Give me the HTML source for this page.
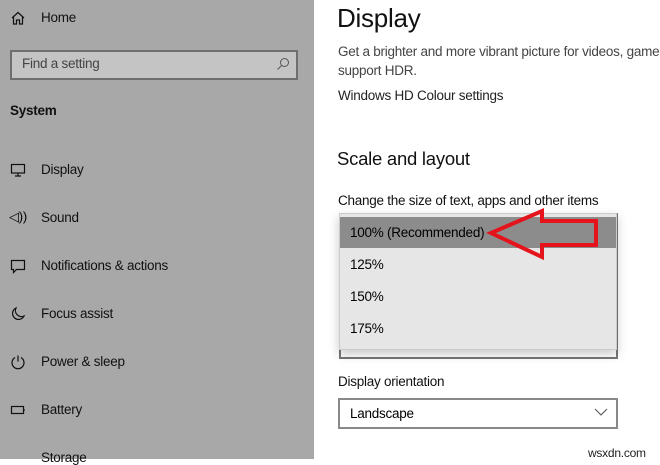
<!DOCTYPE html>
<html><head><meta charset="utf-8"><style>
*{margin:0;padding:0;box-sizing:border-box}
body{width:660px;height:459px;overflow:hidden;background:#fff;font-family:"Liberation Sans",sans-serif;position:relative;color:#000;letter-spacing:-0.25px}
.sb{position:absolute;left:0;top:0;width:314px;height:459px;background:#a8a8a8}
.t{position:absolute;white-space:nowrap}
.ni{position:absolute;left:41px;font-size:13.5px;color:#111}
.ic{position:absolute;left:10px;width:16px;height:16px}
</style></head><body>
<div class="sb">
<svg class="ic" style="top:10px" viewBox="0 0 16 16" fill="none" stroke="#111" stroke-width="1.2"><path d="M2 8L8 2.5 14 8M3.5 7V14H6.5V10H9.5V14H12.5V7"/></svg>
<div class="ni" style="top:10px">Home</div>
<div style="position:absolute;left:10px;top:50px;width:288px;height:30px;border:2px solid #6e6e6e;background:#c4c4c4"></div>
<div class="t" style="left:22px;top:56px;font-size:13.5px;color:#444">Find a setting</div>
<svg style="position:absolute;left:276px;top:57px" width="14" height="14" viewBox="0 0 14 14" fill="none" stroke="#555" stroke-width="1"><circle cx="8.5" cy="5.5" r="4"/><path d="M5.5 8.5L1.5 12.5"/></svg>
<div class="t" style="left:10px;top:103px;font-size:13.5px;font-weight:bold;color:#111">System</div>
<svg class="ic" style="top:162px" viewBox="0 0 16 16" fill="none" stroke="#111" stroke-width="1.2"><rect x="1.5" y="2.5" width="13" height="8.5"/><path d="M8 11v3M5 14h6"/></svg>
<div class="ni" style="top:162px">Display</div>
<div class="t" style="left:9px;top:209px;font-size:13px">◁))</div>
<div class="ni" style="top:210px">Sound</div>
<svg class="ic" style="top:258px" viewBox="0 0 16 16" fill="none" stroke="#111" stroke-width="1.2"><path d="M1.5 2.5h13v9h-8l-3 3v-3h-2z"/></svg>
<div class="ni" style="top:258px">Notifications &amp; actions</div>
<svg class="ic" style="top:306px" viewBox="0 0 16 16" fill="none" stroke="#111" stroke-width="1.2"><path d="M6 2a6 6 0 1 0 8 8A6 6 0 0 1 6 2z"/></svg>
<div class="ni" style="top:306px">Focus assist</div>
<svg class="ic" style="top:354px" viewBox="0 0 16 16" fill="none" stroke="#111" stroke-width="1.2"><path d="M5 3.5a6 6 0 1 0 6 0M8 1.5v6"/></svg>
<div class="ni" style="top:354px">Power &amp; sleep</div>
<svg class="ic" style="top:402px" viewBox="0 0 16 16" fill="none" stroke="#111" stroke-width="1.2"><rect x="1.5" y="4.5" width="12" height="7"/><path d="M14 7v2"/></svg>
<div class="ni" style="top:402px">Battery</div>
<div class="ni" style="top:450px">Storage</div>
</div>
<div class="t" style="left:337px;top:3px;font-size:26px;color:#111">Display</div>
<div class="t" style="left:338px;top:44px;font-size:13.5px;color:#444">Get a brighter and more vibrant picture for videos, games</div>
<div class="t" style="left:338px;top:63px;font-size:13.5px;color:#444">support HDR.</div>
<div class="t" style="left:338px;top:88px;font-size:13.5px;color:#222">Windows HD Colour settings</div>
<div class="t" style="left:337px;top:148px;font-size:18.5px;color:#111">Scale and layout</div>
<div class="t" style="left:338px;top:193px;font-size:13.5px;color:#111">Change the size of text, apps and other items</div>
<div style="position:absolute;left:339px;top:213px;width:279px;height:146px;border:2px solid #777;border-top:none"></div>
<div style="position:absolute;left:339px;top:213px;width:278px;height:137px;background:#e6e6e6;border:1px solid #ccc;box-shadow:0 4px 10px rgba(0,0,0,.22)"></div>
<div style="position:absolute;left:340px;top:217px;width:276px;height:31px;background:#8c8c8c"></div>
<div class="t" style="left:350px;top:225px;font-size:13.5px">100% (Recommended)</div>
<div class="t" style="left:350px;top:257px;font-size:13.5px">125%</div>
<div class="t" style="left:350px;top:289px;font-size:13.5px">150%</div>
<div class="t" style="left:350px;top:321px;font-size:13.5px">175%</div>
<svg style="position:absolute;left:0;top:0" width="660" height="459"><path d="M491 233L542 211V221H596V245H542V257Z" fill="none" stroke="#e5141c" stroke-width="4" stroke-linejoin="miter"/></svg>
<div class="t" style="left:338px;top:374px;font-size:13.5px;color:#111">Display orientation</div>
<div style="position:absolute;left:338px;top:398px;width:280px;height:31px;border:2px solid #888"></div>
<div class="t" style="left:350px;top:406px;font-size:13.5px">Landscape</div>
<svg style="position:absolute;left:594px;top:407px" width="14" height="10" viewBox="0 0 14 10" fill="none" stroke="#555" stroke-width="1.1"><path d="M1 2l6 6 6-6"/></svg>
<div class="t" style="left:588px;top:446px;font-size:12px;color:#222">wsxdn.com</div>
</body></html>
